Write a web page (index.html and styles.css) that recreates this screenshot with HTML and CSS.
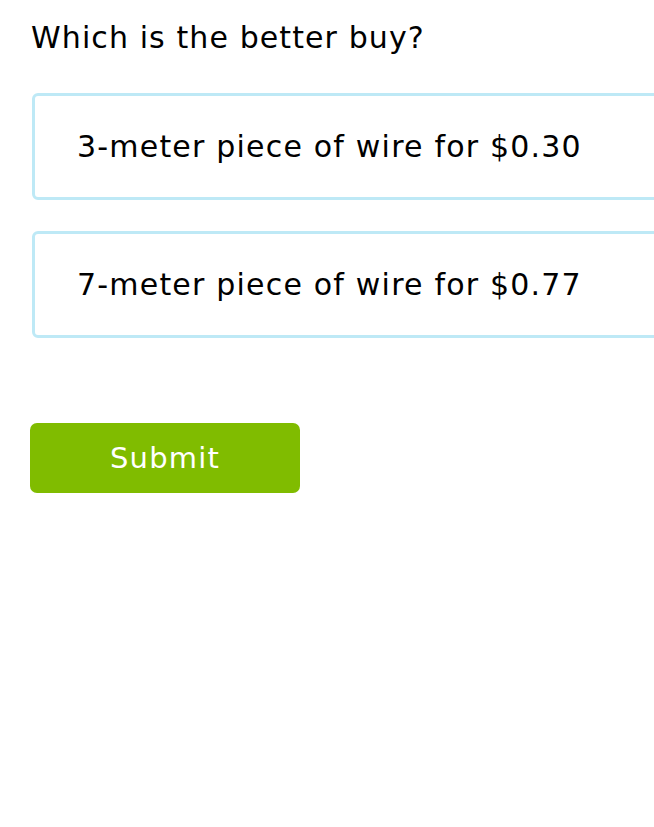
FILE: index.html
```html
<!DOCTYPE html>
<html>
<head>
<meta charset="utf-8">
<link rel="stylesheet" href="styles.css">
</head>
<body>
<div class="page">
  <h1 class="question">Which is the better buy?</h1>
  <div class="choices">
    <div class="choice">3-meter piece of wire for $0.30</div>
    <div class="choice">7-meter piece of wire for $0.77</div>
  </div>
  <button class="submit">Submit</button>
</div>
</body>
</html>
```
FILE: styles.css
```css
html, body {
  margin: 0;
  padding: 0;
  background: #ffffff;
  overflow: hidden;
}
.page {
  font-family: "DejaVu Sans", Verdana, sans-serif;
  color: #000;
  padding: 20px 0 0 31px;
  width: 700px;
}
.question {
  margin: 0;
  font-size: 30px;
  font-weight: normal;
  line-height: 36px;
  letter-spacing: 1.1px;
}
.choices {
  margin-top: 37px;
  display: flex;
  flex-direction: column;
  gap: 31px;
}
.choice {
  margin-left: 1px;
  border: 3px solid #bee9f6;
  border-radius: 6px;
  height: 107px;
  box-sizing: border-box;
  display: flex;
  align-items: center;
  padding-left: 42px;
  font-size: 30px;
  letter-spacing: 1.2px;
}
.submit {
  margin-top: 85px;
  margin-left: -1px;
  width: 270px;
  height: 70px;
  background: #80bc00;
  color: #fff;
  border: none;
  border-radius: 7px;
  font-family: "DejaVu Sans", Verdana, sans-serif;
  font-size: 29px;
  letter-spacing: 1.2px;
  padding: 0;
}
```
